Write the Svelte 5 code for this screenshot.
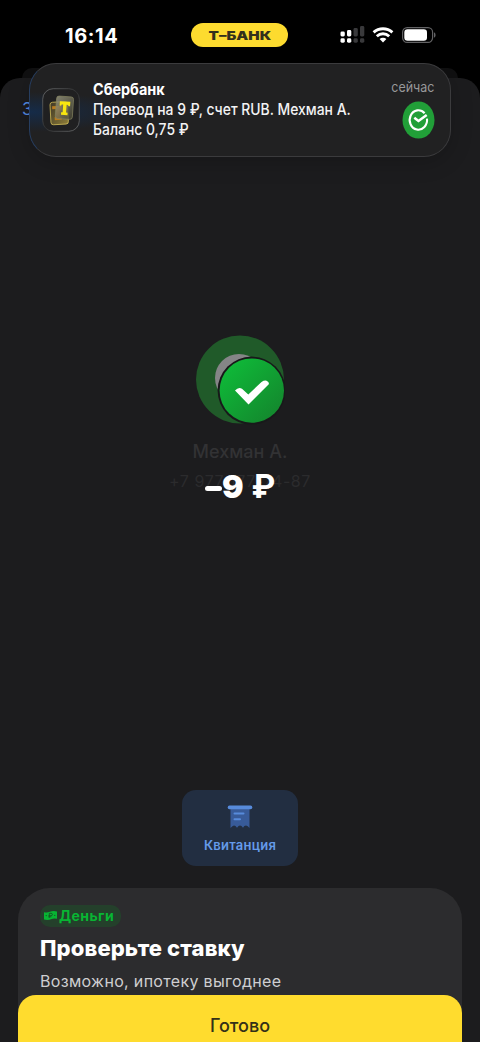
<script>
  const notice = {
    app: 'Сбербанк',
    lines: ['Перевод на 9 ₽, счет RUB. Мехман А.', 'Баланс 0,75 ₽'],
    time: 'сейчас'
  };
</script>

<main class="screen">
  <header class="status">
    <span class="clock">16:14</span>
    <span class="brand"><b>Т–БАНК</b></span>
    <span class="indicators">
      <svg width="26" height="18" viewBox="0 0 26 18" fill="#fff">
        <rect x=".5" y="5.5" width="4.300" height="5" rx="1.4" />
        <rect x="7" y="4" width="4.300" height="6.5" rx="1.4" />
        <g fill="#39393b">
          <rect x="13.500" y="2" width="4.300" height="8.5" rx="1.4" />
          <rect x="20" y="0" width="4.300" height="10.5" rx="1.4" />
          <rect x="13.500" y="12.3" width="4.300" height="4.4" rx="1.4" />
          <rect x="20" y="12.3" width="4.300" height="4.4" rx="1.4" />
        </g>
        <rect x=".5" y="12.3" width="4.300" height="4.4" rx="1.4" />
        <rect x="7" y="12.3" width="4.300" height="4.4" rx="1.4" />
      </svg>
      <svg class="wifi" width="22" height="16" viewBox="0 0 22 16" fill="none" stroke="#fff" stroke-width="2.9">
        <path d="M1.6 5.4C7 .5 15 .5 20.400 5.400" />
        <path d="M4.800 9.200C8.400 5.900 13.600 5.900 17.200 9.200" />
        <path d="M7.600 12C9.500 10.300 12.500 10.300 14.400 12L11 15.400Z" fill="#fff" stroke="none" />
      </svg>
      <svg class="battery" width="34" height="16" viewBox="0 0 34 16">
        <rect x=".6" y=".6" width="30" height="14.800" rx="4.600" fill="none" stroke="#626264" stroke-width="1.200" />
        <rect x="2.300" y="2.300" width="22.700" height="11.400" rx="3.200" fill="#fff" />
        <path d="M32 5.300Q33.600 6 33.600 8T32 10.700Z" fill="#626264" />
      </svg>
    </span>
  </header>

  <div class="back-sheet"></div>

  <section class="sheet">
    <nav>Закрыть</nav>

    <div class="transfer">
      <svg width="90" height="90" viewBox="0 0 90 90">
        <defs>
          <linearGradient id="done" x1="0" y1="0" x2="1" y2="1">
            <stop offset=".05" stop-color="#0ebd39" />
            <stop offset="1" stop-color="#14812c" />
          </linearGradient>
        </defs>
        <circle cx="45" cy="44.500" r="44" fill="#205a29" />
        <circle cx="44" cy="43" r="24" fill="#858587" />
        <circle cx="56.600" cy="55.600" r="34" fill="#18191a" />
        <circle cx="56.800" cy="55.600" r="32.200" fill="url(#done)" />
        <path d="M40 55.500Q43.500 51.500 47 53.700L53.300 59.500 66.500 47Q69 45.300 71.500 45.700 74 46.500 74 49L53.500 69.500Z" fill="#fff" />
      </svg>
      <div class="name">Мехман А.</div>
      <div class="phone">+7 977 177-74-87</div>
      <strong class="amount"><i></i>9 <span>₽</span></strong>
    </div>

    <button class="receipt">
      <svg width="26" height="24" viewBox="0 0 26 24">
        <path d="M3.500 2H22.500V23Q20.800 20.500 19 20.500T16 22.800Q14.500 20.500 13 20.500T10 22.800Q8.500 20.500 7 20.500T3.500 23Z" fill="#385b99" />
        <rect x=".7" y=".6" width="24.600" height="3.600" rx="1.800" fill="#578bdc" />
        <path d="M7.500 8.600H16.500M7.500 14.300H13" stroke="#578bdc" stroke-width="2" stroke-linecap="round" />
      </svg>
      <span>Квитанция</span>
    </button>

    <article class="offer">
      <span class="tag">
        <svg width="13" height="9" viewBox="0 0 13 9">
          <path d="M0 1.200Q3 2 6 .8T13 .5V7.800Q10 7 7 8.200T0 8.500Z" fill="#08b533" />
          <path d="M5.300 6.800V2.300H7.100Q8.400 2.300 8.400 3.500T7.100 4.700H4.500M4.500 5.800H7.300" stroke="#164b23" stroke-width=".8" fill="none" />
          <circle cx="2.200" cy="4.600" r=".6" fill="#164b23" /><circle cx="10.800" cy="4.300" r=".6" fill="#164b23" />
        </svg>
        Деньги
      </span>
      <h2>Проверьте ставку</h2>
      <p>Возможно, ипотеку выгоднее<br />рефинансировать</p>
    </article>
  </section>

  <button class="done">Готово</button>

  <aside class="notice">
    <svg class="app-icon" width="38" height="44" viewBox="0 0 38 44">
      <defs>
        <linearGradient id="rim" x1="0" y1="0" x2="1" y2="1">
          <stop offset="0" stop-color="#626466" /><stop offset=".5" stop-color="#303132" /><stop offset="1" stop-color="#626364" />
        </linearGradient>
        <linearGradient id="gold" x1="0" y1="0" x2="1" y2="1">
          <stop offset="0" stop-color="#3f3827" /><stop offset="1" stop-color="#8e7d38" />
        </linearGradient>
        <linearGradient id="glass" x1="0" y1="0" x2="1" y2="1">
          <stop offset="0" stop-color="#9b9a82" /><stop offset="1" stop-color="#454331" />
        </linearGradient>
      </defs>
      <rect x=".7" y=".7" width="36.600" height="42.600" rx="10.500" fill="#202021" stroke="url(#rim)" />
      <g transform="rotate(-3 16 26)">
        <rect x="8.500" y="14" width="17.500" height="22.500" rx="2.500" fill="url(#gold)" stroke="#d2bd58" stroke-width=".8" />
        <path d="M10.500 18H20V22.500H18V29H19.500V32H12.500V29H14V21H10.500Z" fill="#b97c1f" />
      </g>
      <g transform="rotate(4 23 19)">
        <rect x="14" y="8.500" width="17" height="22.500" rx="2.500" fill="url(#glass)" fill-opacity=".8" stroke="#858360" stroke-width=".7" />
        <path d="M17.500 13.500H28V18H26.500L25.800 16.700H24.500V24.500H26V27H19.500V24.500H21V16.700H19.500L19 18H17.500Z" fill="#f8e610" />
      </g>
    </svg>
    <div class="message">
      <b>{notice.app}</b>
      {#each notice.lines as line}
        <span>{line}</span>
      {/each}
    </div>
    <div class="meta">
      <time>{notice.time}</time>
      <svg width="33" height="38" viewBox="0 0 33 38">
        <ellipse cx="16.500" cy="19" rx="16" ry="18.600" fill="#219f38" />
        <path d="M22.600 12.200A8.700 9.700 0 1 0 25 17.700" fill="none" stroke="#fff" stroke-width="2.100" />
        <path d="M12.300 16.700 16.500 20 24.700 14" fill="none" stroke="#fff" stroke-width="2.500" />
      </svg>
    </div>
  </aside>
</main>

<style>
  :global(body) { background: #000; }
  .screen {
    position: relative;
    display: flex;
    flex-direction: column;
    box-sizing: border-box;
    height: 1042px;
    overflow: hidden;
    background: #000;
    color: #fff;
    font-family: Inter, "Liberation Sans", sans-serif;
  }
  button { border: 0; font-family: inherit; }
  svg { flex: none; }
  .status {
    display: grid;
    grid-template-columns: 191px 97px 1fr;
    align-items: center;
    box-sizing: border-box;
    height: 68px;
    flex: none;
    padding-top: 2px;
  }
  .clock { padding: 2px 0 0 65px; font-size: 20px; font-weight: 700; letter-spacing: .6px; }
  .brand {
    display: grid;
    place-items: center;
    height: 24px;
    border-radius: 12px;
    background: #fddb2f;
    color: #33301c;
  }
  .brand b { font-size: 12px; font-weight: 900; transform: scaleX(1.26); }
  .indicators { display: flex; align-items: center; padding-left: 52px; }
  .wifi { margin-left: 6px; }
  .battery { margin-left: 8px; }
  .back-sheet { height: 10px; flex: none; margin: 0 22px; border-radius: 14px 14px 0 0; background: #101011; }
  .sheet {
    display: flex;
    flex: 1;
    flex-direction: column;
    align-items: center;
    min-height: 0;
    border-radius: 20px 20px 0 0;
    background: #1c1c1e;
  }
  nav { box-sizing: border-box; align-self: flex-start; padding: 20px 0 0 22px; height: 257px; flex: none; color: #538be4; font-size: 17px; line-height: 22px; }
  .transfer { position: relative; display: flex; flex-direction: column; align-items: center; width: 100%; height: 455px; flex: none; }
  .name { margin-top: 15px; color: #323234; font-size: 18px; line-height: 24px; font-weight: 500; }
  .phone { margin-top: 6px; color: #2b2b2d; font-size: 16px; line-height: 22px; letter-spacing: .55px; }
  .amount { position: absolute; top: 132px; left: 205px; display: flex; align-items: center; font-size: 32px; line-height: 40px; font-weight: 900; }
  .amount i { width: 17px; height: 5px; margin-top: 2px; border-radius: 3px; background: #fff; }
  .amount span { margin-left: 8px; font-weight: 700; }
  .receipt {
    display: flex;
    flex-direction: column;
    align-items: center;
    gap: 6px;
    width: 116px;
    height: 76px;
    padding: 15px 0 0;
    flex: none;
    border-radius: 14px;
    background: #222e41;
    color: #659bea;
  }
  .receipt span { font-size: 13px; line-height: 20px; font-weight: 600; letter-spacing: .25px; }
  .offer {
    box-sizing: border-box;
    width: 444px;
    height: 200px;
    flex: none;
    margin-top: 22px;
    padding: 17px 22px;
    border-radius: 32px 32px 0 0;
    background: #2c2c2e;
  }
  .tag {
    display: flex;
    align-items: center;
    gap: 2px;
    width: 81px;
    height: 22px;
    box-sizing: border-box;
    padding: 0 0 1px 4px;
    border-radius: 10px;
    background: #24402b;
    color: #08b533;
    font-size: 14px;
    font-weight: 700;
    letter-spacing: .4px;
  }
  h2 { margin: 6px 0 0; font-size: 22px; line-height: 30px; font-weight: 800; letter-spacing: .12px; }
  p { margin: 8px 0 0; color: #cfcfd1; font-size: 16px; line-height: 20px; letter-spacing: .32px; }
  .done {
    position: absolute;
    top: 994.5px;
    left: 18px;
    width: 444px;
    height: 68px;
    padding: 0 0 7px;
    border-radius: 18px;
    background: #ffdc2e;
    color: #333018;
    font-size: 18px;
    font-weight: 500;
  }
  .notice {
    position: absolute;
    top: 63px;
    left: 29px;
    display: grid;
    grid-template-columns: 38px minmax(0, 1fr) 48px;
    gap: 13px;
    box-sizing: border-box;
    width: 422px;
    height: 94px;
    padding: 0 16px 0 12px;
    border: 1px solid #3b3b3d;
    border-left-color: #273e60;
    border-radius: 27px;
    background: radial-gradient(ellipse 96px 20px at 0 48px, #152b48, transparent), #212122;
    box-shadow: 0 5px 22px #0003;
  }
  .app-icon { margin-top: 24px; }
  .message { display: flex; flex-direction: column; align-items: flex-start; padding-top: 15px; white-space: nowrap; font-size: 16px; line-height: 20px; }
  .message b { font-weight: 700; transform: scaleX(.9); transform-origin: left; }
  .message span { color: #f3f3f4; font-weight: 500; transform: scaleX(.869); transform-origin: left; }
  .meta { display: flex; flex-direction: column; align-items: flex-end; padding-top: 14px; }
  time { color: #98989a; font-size: 14px; line-height: 18px; transform: scaleX(.89); transform-origin: right; }
  .meta svg { margin: 5px -1px 0 0; }
</style>
